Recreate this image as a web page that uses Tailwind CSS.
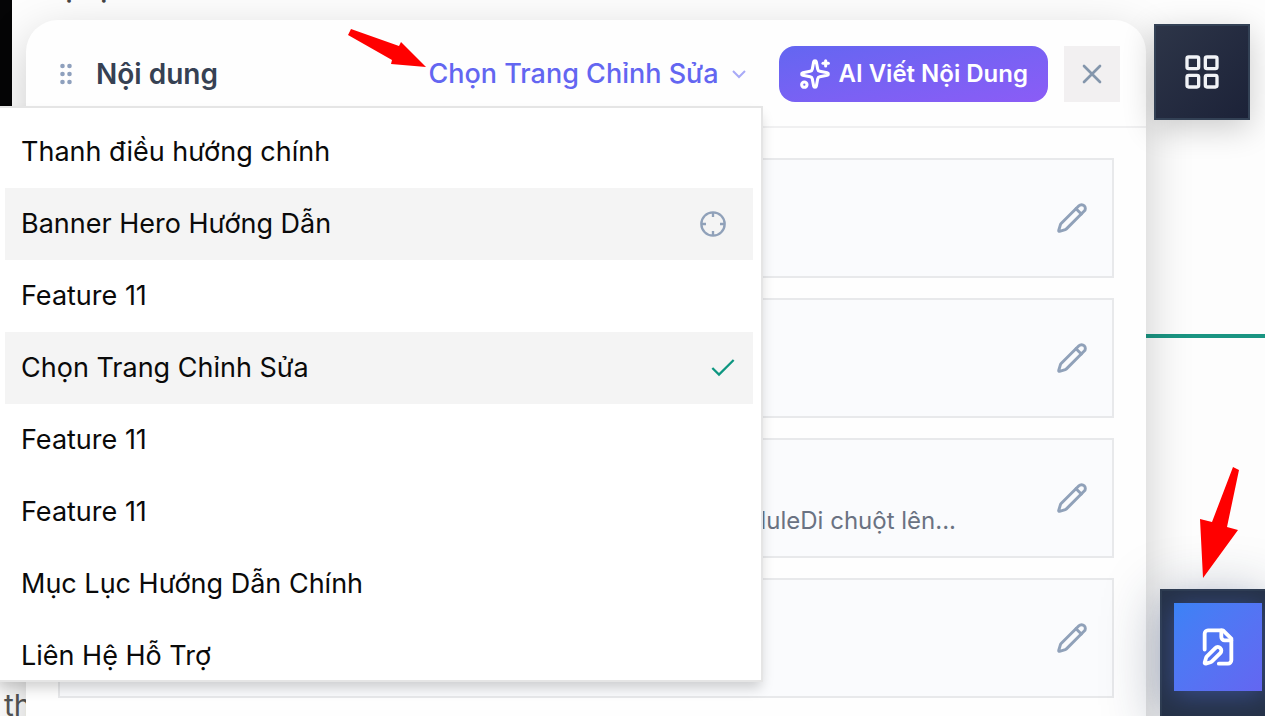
<!DOCTYPE html>
<html lang="vi">
<head>
<meta charset="utf-8">
<title>Nội dung</title>
<script src="https://cdn.jsdelivr.net/npm/@tailwindcss/browser@4"></script>
</head>
<body class="relative h-screen overflow-hidden bg-[#fdfdfd] font-['Inter','Noto_Sans',sans-serif]">
  <svg class="hidden">
    <symbol id="pencil" viewBox="0 0 24 24"><path d="M21.174 6.812a1 1 0 0 0-3.986-3.987L3.842 16.174a2 2 0 0 0-.5.83l-1.321 4.352a.5.5 0 0 0 .623.622l4.353-1.32a2 2 0 0 0 .83-.497z"/><path d="m15 5 4 4"/></symbol>
  </svg>

  <!-- Page behind the editor -->
  <div class="absolute inset-0 overflow-hidden">
    <div class="absolute left-0 top-0 h-[400px] w-3 bg-[#050506]"></div>
    <p class="absolute -top-8 left-[60px] text-[30px] leading-9 text-[#444]">ọ&nbsp; ọ</p>
    <div class="absolute right-0 top-[334px] h-1 w-40 bg-[#1a9582]"></div>
    <p class="absolute left-1 top-[687px] text-[30px] leading-9 text-[#555]">th</p>
  </div>

  <div class="relative flex h-screen overflow-hidden pl-[26px] pt-5">
    <section class="relative h-[900px] min-w-0 flex-1 rounded-t-[32px] bg-[#fefefe] shadow-[0_16px_48px_rgba(0,0,0,0.2)]">
      <header class="flex items-center border-b-2 border-[#f0f0f1] px-[26px] pb-6 pt-[26px]">
        <button type="button" aria-label="Kéo" class="ml-1 text-[#8ea0bd]">
          <svg class="h-6 w-5" viewBox="0 0 20 24" fill="currentColor"><circle cx="6.500" cy="4" r="2.300"/><circle cx="13.500" cy="4" r="2.300"/><circle cx="6.500" cy="12" r="2.300"/><circle cx="13.500" cy="12" r="2.300"/><circle cx="6.500" cy="20" r="2.300"/><circle cx="13.500" cy="20" r="2.300"/></svg>
        </button>
        <h1 class="ml-5 text-[28px] font-semibold leading-9 text-[#364153]">Nội dung</h1>
        <button type="button" aria-expanded="true" class="ml-auto flex items-center gap-2 text-[27px] font-medium leading-9 text-[#6366f1]">
          Chọn Trang Chỉnh Sửa
          <svg class="size-6 text-[#a8aaf7]" viewBox="0 0 24 24" fill="none" stroke="currentColor" stroke-width="2"><path d="m6 9 6 6 6-6"/></svg>
        </button>
        <button type="button" class="ml-7 flex h-14 items-center gap-2 rounded-2xl bg-linear-to-br from-[#6366f1] to-[#8b5cf6] px-5 text-2xl font-semibold text-white">
          <svg class="size-8" viewBox="0 0 24 24" fill="none" stroke="currentColor" stroke-width="2.300" stroke-linecap="round" stroke-linejoin="round"><path d="M11.017 2.814a1 1 0 0 1 1.966 0l1.051 5.558a2 2 0 0 0 1.594 1.594l5.558 1.051a1 1 0 0 1 0 1.966l-5.558 1.051a2 2 0 0 0-1.594 1.594l-1.051 5.558a1 1 0 0 1-1.966 0l-1.051-5.558a2 2 0 0 0-1.594-1.594l-5.558-1.051a1 1 0 0 1 0-1.966l5.558-1.051a2 2 0 0 0 1.594-1.594z"/><path d="M20 2v4"/><path d="M22 4h-4"/><circle cx="4" cy="20" r="2"/></svg>
          AI Viết Nội Dung
        </button>
        <button type="button" aria-label="Đóng" class="ml-4 grid size-14 place-items-center bg-[#f2f0f1] text-[#8496ac]">
          <svg class="size-8" viewBox="0 0 24 24" fill="none" stroke="currentColor" stroke-width="2" stroke-linecap="round"><path d="M18 6 6 18M6 6l12 12"/></svg>
        </button>
      </header>

      <div class="flex flex-col gap-5 px-8 pt-[30px]">
        <article class="flex h-[120px] items-center justify-end border-2 border-[#e8e9eb] bg-[#fafbfd] pr-6">
          <button type="button" aria-label="Sửa" class="text-[#90a1b9]"><svg class="size-8" fill="none" stroke="currentColor" stroke-width="2.200" stroke-linecap="round" stroke-linejoin="round"><use href="#pencil"/></svg></button>
        </article>
        <article class="flex h-[120px] items-center justify-end border-2 border-[#e8e9eb] bg-[#fafbfd] pr-6">
          <button type="button" aria-label="Sửa" class="text-[#90a1b9]"><svg class="size-8" fill="none" stroke="currentColor" stroke-width="2.200" stroke-linecap="round" stroke-linejoin="round"><use href="#pencil"/></svg></button>
        </article>
        <article class="flex h-[120px] items-center justify-end gap-[100px] border-2 border-[#e8e9eb] bg-[#fafbfd] pr-6">
          <p class="self-end pb-[19px] text-2xl leading-8 text-[#6a7282]">ModuleDi chuột lên...</p>
          <button type="button" aria-label="Sửa" class="text-[#90a1b9]"><svg class="size-8" fill="none" stroke="currentColor" stroke-width="2.200" stroke-linecap="round" stroke-linejoin="round"><use href="#pencil"/></svg></button>
        </article>
        <article class="flex h-[120px] items-center justify-end border-2 border-[#e8e9eb] bg-[#fafbfd] pr-6">
          <button type="button" aria-label="Sửa" class="text-[#90a1b9]"><svg class="size-8" fill="none" stroke="currentColor" stroke-width="2.200" stroke-linecap="round" stroke-linejoin="round"><use href="#pencil"/></svg></button>
        </article>
      </div>
    </section>

    <aside class="relative flex w-[119px] shrink-0 flex-col pt-1">
      <button type="button" aria-label="Khối" class="ml-2 grid size-24 shrink-0 place-items-center border-2 border-[#334155] bg-linear-to-br from-[#2d3548] to-[#1c2238] text-[#f1f3f7] shadow-[0_8px_32px_rgba(0,0,0,0.2)]">
        <svg class="size-10" viewBox="0 0 24 24" fill="none" stroke="currentColor" stroke-width="2"><rect x="3" y="3" width="7" height="7" rx="1"/><rect x="14" y="3" width="7" height="7" rx="1"/><rect x="14" y="14" width="7" height="7" rx="1"/><rect x="3" y="14" width="7" height="7" rx="1"/></svg>
      </button>
      <div class="ml-[14px] mt-auto h-[127px] border-l-2 border-t-2 border-[#2e3c50] bg-[#263248] pl-3 pt-3 shadow-[0_8px_56px_rgba(30,45,80,0.35)]">
        <button type="button" aria-label="Chỉnh sửa trang" class="grid size-[88px] place-items-center bg-linear-to-br from-[#3b82f6] to-[#6366f1] text-white shadow-[0_4px_24px_rgba(79,110,220,0.45)]">
          <svg class="size-10" viewBox="0 0 24 24" fill="none" stroke="currentColor" stroke-width="2.300" stroke-linecap="round" stroke-linejoin="round"><path d="M12.500 22H18a2 2 0 0 0 2-2V7l-5-5H6a2 2 0 0 0-2 2v9.500"/><path d="M14 2v4a2 2 0 0 0 2 2h4"/><path d="M13.378 15.626a1 1 0 1 0-3.004-3.004l-5.010 5.012a2 2 0 0 0-.506.854l-.837 2.870a.5.5 0 0 0 .620.620l2.870-.837a2 2 0 0 0 .854-.506z"/></svg>
        </button>
      </div>
    </aside>
  </div>

  <!-- Open drop-down menu -->
  <ul class="absolute -left-[5px] top-[106px] h-[576px] w-[768px] overflow-hidden border-2 border-[#e5e5e5] bg-white p-2 text-[27px] leading-9 text-[#0a0a0a] shadow-[0_8px_12px_-2px_rgba(0,0,0,0.18)]">
    <li><button type="button" class="flex h-[72px] w-full items-center px-4">Thanh điều hướng chính</button></li>
    <li><button type="button" class="flex h-[72px] w-full items-center justify-between bg-[#f4f4f4] pl-4 pr-[26px]">Banner Hero Hướng Dẫn
      <svg class="size-7 text-[#90a1b9]" viewBox="0 0 24 24" fill="none" stroke="currentColor" stroke-width="2"><circle cx="12" cy="12" r="10"/><path d="M22 12h-4M6 12H2M12 6V2M12 22v-4"/></svg></button></li>
    <li><button type="button" class="flex h-[72px] w-full items-center px-4">Feature 11</button></li>
    <li><button type="button" class="flex h-[72px] w-full items-center justify-between bg-[#f4f4f4] pl-4 pr-[14px]">Chọn Trang Chỉnh Sửa
      <svg class="size-8 text-[#0d9680]" viewBox="0 0 24 24" fill="none" stroke="currentColor" stroke-width="1.700"><path d="M20 6 9 17l-5-5"/></svg></button></li>
    <li><button type="button" class="flex h-[72px] w-full items-center px-4">Feature 11</button></li>
    <li><button type="button" class="flex h-[72px] w-full items-center px-4">Feature 11</button></li>
    <li><button type="button" class="flex h-[72px] w-full items-center px-4">Mục Lục Hướng Dẫn Chính</button></li>
    <li><button type="button" class="flex h-[72px] w-full items-center px-4">Liên Hệ Hỗ Trợ</button></li>
  </ul>

  <!-- Pointer arrows -->
  <svg class="pointer-events-none absolute left-[340px] top-5 h-[60px] w-[100px]" viewBox="340 20 100 60" fill="#ff0000"><path d="M351 29 399 46 401 42 426 67 391 64 392 60 348 35Z"/></svg>
  <svg class="pointer-events-none absolute left-[1190px] top-[460px] h-[130px] w-[60px]" viewBox="1190 460 60 130" fill="#ff0000"><path d="M1233 467 1239 470 1227 527 1238 530 1203 578 1200 519 1212 522Z"/></svg>
</body>
</html>
